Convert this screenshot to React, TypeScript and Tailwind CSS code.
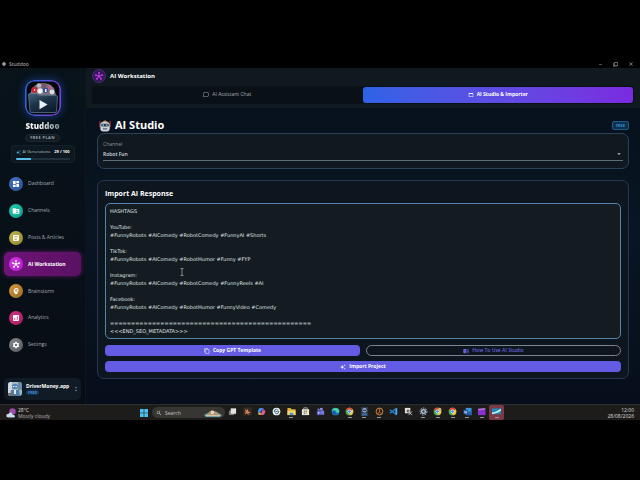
import { useState, type ReactNode } from 'react'
import {
  MdAnalytics,
  MdArrowDropDown,
  MdArticle,
  MdAutoAwesome,
  MdChromeReaderMode,
  MdClose,
  MdContentCopy,
  MdDashboard,
  MdFilterNone,
  MdFolderShared,
  MdHub,
  MdOutlineChatBubbleOutline,
  MdOutlineWebAsset,
  MdPsychology,
  MdRemove,
  MdSearch,
  MdSettings,
  MdUnfoldMore,
} from 'react-icons/md'

const navItems = [
  { label: 'Dashboard', icon: MdDashboard, color: 'from-[#4476c6] to-[#2a4f96]' },
  { label: 'Channels', icon: MdFolderShared, color: 'from-[#1fcfb2] to-[#129c8a]' },
  { label: 'Posts & Articles', icon: MdArticle, color: 'from-[#c6b548] to-[#93862f]' },
  { label: 'AI Workstation', icon: MdHub, color: 'from-[#d633e6] to-[#b31fd0]' },
  { label: 'Brainstorm', icon: MdPsychology, color: 'from-[#d59a3c] to-[#9c6b25]' },
  { label: 'Analytics', icon: MdAnalytics, color: 'from-[#d92f83] to-[#a81d62]' },
  { label: 'Settings', icon: MdSettings, color: 'from-[#85898d] to-[#55595d]' },
]

const response = `HASHTAGS

YouTube:
#FunnyRobots #AIComedy #RobotComedy #FunnyAI #Shorts

TikTok:
#FunnyRobots #AIComedy #RobotHumor #Funny #FYP

Instagram:
#FunnyRobots #AIComedy #RobotComedy #FunnyReels #AI

Facebook:
#FunnyRobots #AIComedy #RobotHumor #FunnyVideo #Comedy

================================================
<<<END_SEO_METADATA>>>`

function Logo() {
  return (
    <svg viewBox="0 0 36 36" className="size-9 rounded-[9px] shadow-[0_0_9px_#2563eb88]">
      <defs>
        <linearGradient id="ring" x1="0" y1="0" x2="1" y2="0.3">
          <stop offset="0" stopColor="#2467d8" />
          <stop offset="1" stopColor="#7543d6" />
        </linearGradient>
        <linearGradient id="folder" x1="0" y1="0" x2="0.6" y2="1">
          <stop offset="0" stopColor="#45637b" />
          <stop offset="0.5" stopColor="#1d3549" />
          <stop offset="1" stopColor="#0d1d2c" />
        </linearGradient>
      </defs>
      <rect x="0.8" y="0.8" width="34.4" height="34.4" rx="8.5" fill="#05070d" stroke="url(#ring)" strokeWidth="1.6" />
      <path d="M5 15 7 8l5-4 5-1 7 1 5 4 2 7z" fill="#77717d" />
      <circle cx="9.5" cy="10" r="3" fill="#c92334" />
      <circle cx="14" cy="5.5" r="2.3" fill="#b4bbc6" />
      <circle cx="19" cy="5.5" r="2.4" fill="#7f5660" />
      <circle cx="15" cy="11" r="2.8" fill="#e6e9ee" />
      <circle cx="20.5" cy="10" r="2.6" fill="#3a4a9d" />
      <circle cx="25" cy="7.5" r="2.3" fill="#b16a8d" />
      <circle cx="27" cy="12" r="2.4" fill="#d9dde6" />
      <path d="m9 9 1.7 1L9 11zM14 10.5h2v2h-2zM20 9h1.5v3H20z" fill="#fff" />
      <path
        d="M3.5 15q0-1.5 1.5-1.5h7l2 2h17q1.7 0 1.5 1.5l-1 14q-.1 1.5-1.5 1.5H6.5Q5 32.5 4.9 31z"
        fill="url(#folder)"
        stroke="#6f94ad"
        strokeWidth="0.6"
      />
      <path d="m14.5 20 8 4.6-8 4.6z" fill="#e9f2f8" />
    </svg>
  )
}

function RobotHead() {
  return (
    <svg viewBox="0 0 12 12" className="size-3">
      <path d="M.4 1h1v6h-1zM10.6 1h1v6h-1z" fill="#c8303f" />
      <path d="M4 1.5Q6-.3 8 1.5l.6 1H3.4z" fill="#c89c67" />
      <rect x="1.3" y="2" width="9.4" height="9.5" rx="3" fill="#ccd0da" />
      <rect x="2.2" y="3.8" width="7.6" height="2.8" rx="1.4" fill="#26384a" />
      <circle cx="4.2" cy="5.2" r="0.9" fill="#68b9d2" />
      <circle cx="7.8" cy="5.2" r="0.9" fill="#68b9d2" />
      <rect x="3.7" y="8.3" width="4.6" height="1.3" rx="0.5" fill="#5b6473" />
    </svg>
  )
}

function Avatar() {
  return (
    <svg viewBox="0 0 14 14" className="size-3.5 shrink-0 rounded-[3px]">
      <rect width="14" height="14" fill="#9fb6c6" />
      <path d="M0 0h4v14H0z" fill="#d1d8dc" />
      <path d="M10 0h4v8h-4z" fill="#6c8ba0" />
      <rect x="4" y="2" width="6" height="5" rx="2" fill="#4f87b0" />
      <path d="M5 4h1.5v1H5zM7.5 4H9v1H7.5z" fill="#e6f5ff" />
      <path d="M3 8h8l1 6H2z" fill="#4d7ba2" />
      <path d="M6 8h2v4H6z" fill="#dfe7ec" />
      <path d="M0 11h3l1 3H0z" fill="#836c54" />
    </svg>
  )
}

function Sidebar() {
  const [active, setActive] = useState('AI Workstation')

  return (
    <aside className="flex w-[86px] shrink-0 flex-col border-r border-[#0d1521] bg-linear-to-b from-[#08131a] to-[#080d15] px-1">
      <div className="flex flex-col items-center pt-3">
        <Logo />
        <p className="mt-1 bg-linear-to-r from-white from-35% to-[#7d8d98] bg-clip-text text-[8px] leading-[12px] font-extrabold text-transparent">
          Studdoo
        </p>
        <p className="mt-0.5 rounded-full border border-[#1c2932] bg-[#111c23] px-1 text-[4px] leading-[6px] font-bold tracking-widest text-[#9aa5ab]">
          FREE PLAN
        </p>
        <div className="mt-[3px] w-16 rounded-[4px] border border-[#15212a] bg-[#0e1820] px-1 py-0.5 whitespace-nowrap">
          <div className="flex items-center text-[4px] leading-[8px]">
            <MdAutoAwesome className="mr-0.5 size-[5px] text-[#4db4e8]" />
            <span className="text-[#b9c4ca]">AI Generations</span>
            <span className="ml-auto font-bold text-white">29 / 100</span>
          </div>
          <div className="mt-0.5 h-0.5 overflow-hidden rounded-full bg-[#21313b]">
            <div className="h-full w-[29%] bg-[#58bfec]" />
          </div>
        </div>
      </div>

      <nav className="mt-[9px] flex flex-1 flex-col justify-between">
        {navItems.map(({ label, icon: Icon, color }) => (
          <button
            key={label}
            onClick={() => setActive(label)}
            className={`flex h-6 items-center gap-[5px] rounded-[5px] pl-[5px] text-[5px] ${
              active === label
                ? 'bg-linear-to-r from-[#701379] to-[#5a1163] font-bold text-white shadow-[0_0_5px_#a21caf88]'
                : 'font-medium text-[#a3abb0]'
            }`}
          >
            <span className={`grid size-[14px] place-items-center rounded-full bg-linear-to-br ${color}`}>
              <Icon className="size-2 text-white" />
            </span>
            {label}
          </button>
        ))}
      </nav>

      <button className="mt-[21px] mb-1 flex h-[22px] items-center gap-1 rounded-[5px] bg-[#101b26] px-1 text-left">
        <Avatar />
        <span className="flex flex-1 flex-col items-start">
          <span className="text-[5px] leading-[7px] font-bold text-white">DriverMoney.app</span>
          <span className="rounded-[2px] bg-[#113255] px-0.5 text-[4px] leading-[5px] font-bold text-[#4a8bd0]">FREE</span>
        </span>
        <MdUnfoldMore className="size-1.5 shrink-0 text-[#a4adb5]" />
      </button>
    </aside>
  )
}

function Workstation() {
  const [text, setText] = useState(response)

  return (
    <main className="flex min-w-0 flex-1 flex-col bg-linear-to-b from-[#07101b] via-[#091523] to-[#070e1b]">
      <header className="bg-[#101820] px-1.5 pb-1">
        <div className="flex h-[18px] items-center gap-1 pb-0.5">
          <span className="grid size-[14px] place-items-center rounded-full border border-[#4a2a73] bg-[#33195a]">
            <MdHub className="size-2 text-[#c33be4]" />
          </span>
          <h1 className="text-[6px] font-bold text-white">AI Workstation</h1>
        </div>
        <div role="tablist" className="flex rounded-[3px] bg-[#0a1116] pr-px">
          <button
            role="tab"
            aria-selected="false"
            className="flex h-[18px] flex-1 items-center justify-center gap-[3px] text-[5px] font-medium text-[#a5adb2]"
          >
            <MdOutlineChatBubbleOutline className="size-1.5" />
            AI Assistant Chat
          </button>
          <button
            role="tab"
            aria-selected="true"
            className="my-px flex flex-1 items-center justify-center gap-[3px] rounded-[3px] bg-linear-to-r from-[#2c63e6] to-[#7a2ae0] text-[5px] font-bold text-white"
          >
            <MdOutlineWebAsset className="size-1.5" />
            AI Studio &amp; Importer
          </button>
        </div>
      </header>

      <div className="flex-1 px-[11px] pt-2.5">
        <div className="flex h-[15px] items-center gap-1 pl-0.5">
          <RobotHead />
          <h2 className="text-[11px] font-bold text-white">AI Studio</h2>
          <span className="ml-auto rounded-[2px] border border-[#205b86] bg-[#0c3050] px-[3px] text-[4px] leading-[7px] font-bold text-[#3c8cc7]">
            FREE
          </span>
        </div>

        <section className="rounded-[7px] border border-[#2b4156] bg-[#101820] px-[5px] pt-[6px] pb-[7px]">
          <label htmlFor="channel" className="block text-[5px] leading-[8px] text-[#8b959c]">
            Channel
          </label>
          <div className="relative mt-0.5">
            <select
              id="channel"
              className="block h-[11px] w-full appearance-none border-b border-[#5b7078] bg-transparent text-[5px] font-semibold text-[#d8dde0] outline-none"
            >
              <option>Robot Fun</option>
            </select>
            <MdArrowDropDown className="pointer-events-none absolute top-0 right-0 size-2 text-[#c8ced3]" />
          </div>
        </section>

        <section className="mt-[11px] rounded-[7px] border border-[#2b3452] bg-[#0d161e] px-[7px] pt-[7px] pb-1.5">
          <h3 className="text-[7px] leading-[11px] font-bold text-white">
            <label htmlFor="response">Import AI Response</label>
          </h3>
          <div className="relative mt-1">
            <textarea
              id="response"
              rows={16}
              value={text}
              onChange={(e) => setText(e.target.value)}
              className="block w-full resize-none overflow-hidden rounded-[5px] border border-[#5585ae] bg-[#141c21] px-1 py-[3px] font-['DejaVu_Sans',sans-serif] text-[5px] leading-[8px] text-[#dfe3e4] outline-none"
            />
            <svg viewBox="0 0 4 8" className="pointer-events-none absolute top-[65px] left-[75px] h-2 w-1">
              <path d="M.5.5h3M.5 7.5h3M2 .5v7" stroke="#aeb4b6" strokeWidth="0.7" />
            </svg>
          </div>
          <div className="mt-1.5 grid grid-cols-2 gap-1.5">
            <button className="flex h-[11px] items-center justify-center gap-[3px] rounded-[4px] bg-[#635be3] text-[5px] font-bold text-white">
              <MdContentCopy className="size-1.5" />
              Copy GPT Template
            </button>
            <button className="flex h-[11px] items-center justify-center gap-[3px] rounded-full border border-[#7d858c] text-[5px] font-semibold text-[#6860d8]">
              <MdChromeReaderMode className="size-1.5" />
              How To Use AI Studio
            </button>
          </div>
          <button className="mt-[5px] flex h-[11px] w-full items-center justify-center gap-[3px] rounded-[4px] bg-[#635be3] text-[5px] font-bold text-white">
            <MdAutoAwesome className="size-1.5" />
            Import Project
          </button>
        </section>
      </div>
    </main>
  )
}

const chrome = (
  <>
    <circle cx="5" cy="5" r="4.3" fill="#48a856" />
    <path d="M5 5 1.3 2.8A4.3 4.3 0 0 1 8.7 2.8z" fill="#df493b" />
    <path d="M5 5 8.7 2.8A4.3 4.3 0 0 1 5 9.3z" fill="#f1c444" />
    <circle cx="5" cy="5" r="2.1" fill="#f3f5f5" />
    <circle cx="5" cy="5" r="1.5" fill="#4486df" />
  </>
)

const apps: { name: string; running?: boolean; current?: boolean; art: ReactNode }[] = [
  { name: 'Task View', art: <><path d="M1 4h6v5H1z" fill="#777" /><path d="M3 1.5h6v6H3z" fill="#e4e4e4" /></> },
  { name: 'Editor', art: <><path d="M.5.5h9v9h-9z" fill="#382b25" /><path d="m2 2 2 2 1-2 1 3 3 1-3 1 1 2-3-2-2 1 1-3z" fill="#d4834b" /></> },
  {
    name: 'Copilot',
    art: (
      <>
        <path d="M3 1h3.5L5 6.5H1Q1 2 3 1z" fill="#3e91df" />
        <path d="M6 1q2 0 2 2.5H5z" fill="#7653cf" />
        <path d="M5 3.5h4.3Q9 8 7 9H3.5z" fill="#df5a91" />
        <path d="M1 6.5h4L3.5 9Q1 9 1 6.5z" fill="#e2b84e" />
        <path d="m5 3.5 1 .5-1.5 3-1-.5z" fill="#262230" />
      </>
    ),
  },
  { name: 'ChatGPT', art: <><circle cx="5" cy="5" r="4.3" fill="#edf2f2" /><path d="M2.5 5.5q0-3 2.5-3l2 1.5M7.5 4.5q0 3-2.5 3L3 6M4 5h2" fill="none" stroke="#245568" strokeWidth="1" /></> },
  { name: 'File Explorer', running: true, art: <><path d="M.5 1h3.5l1 1.5h4.5V9h-9z" fill="#e2ae3b" /><path d="M.5 4h9v5h-9z" fill="#f5d66e" /><path d="M3 6.5h4V9H3z" fill="#4a8fc8" /></> },
  { name: 'Store', art: <><path d="M3 2.5V1h4v1.5" fill="none" stroke="#9fb6bb" /><path d="M1 2.5h8V9H1z" fill="#eeeee5" /><path d="M3 4h1.8v1.8H3z" fill="#dc5b45" /><path d="M5.2 4H7v1.8H5.2z" fill="#74ad45" /><path d="M3 6.2h1.8V8H3z" fill="#3e9bd4" /><path d="M5.2 6.2H7V8H5.2z" fill="#e6b23e" /></> },
  { name: 'Teams', art: <><circle cx="6" cy="2.3" r="1.6" fill="#8f90f0" /><circle cx="2.8" cy="3" r="1.2" fill="#7f80e0" /><path d="M3 4h6v4.5H4z" fill="#7877de" /><path d="M.8 4.5H5V9H.8z" fill="#5255c0" /><path d="M2 6h2M3 6v2" stroke="#fff" strokeWidth="0.7" /></> },
  { name: 'Edge', art: <><circle cx="5" cy="5" r="4.3" fill="#1976bd" /><path d="M.8 4.5A4.3 4.3 0 0 1 9.3 5Q8 7 6 6q0-2-2-2Q2 3.5.8 4.5z" fill="#48cfa7" /><path d="M4 4Q2.5 7 6.5 8 3 9 1.7 6.5 1.7 4 4 4z" fill="#125497" /></> },
  { name: 'Chrome', running: true, art: chrome },
  { name: 'Studdoo', running: true, art: <><path d="M1 0h8v10H1z" fill="#29394e" /><circle cx="5" cy="3.5" r="2.5" fill="#a8b5c3" /><path d="M3 3h4v1.5H3z" fill="#1c3c66" /><path d="M2 7h6v2.5H2z" fill="#3f6da4" /></> },
  { name: 'Navigator', running: true, art: <><circle cx="5" cy="5" r="3.8" fill="#2b2518" stroke="#c29b42" /><path d="M5 1v4.5L2.5 8M5 5.5 7.5 8" fill="none" stroke="#ce553a" strokeWidth="1.1" /></> },
  { name: 'VS Code', art: <><path d="m7 .8 2.2 1v6.4L7 9.2z" fill="#47aced" /><path d="M7.5 2 1 7M7.5 8 1 3" stroke="#2385ce" strokeWidth="1.5" /></> },
  { name: 'Snipping Tool', art: <><path d="M1 1h6v6H1z" fill="#e9e4dc" /><path d="M3 3h3v3H3z" fill="#685f5b" /><path d="m5 5 4 4M9 5 5 9" stroke="#b8c6ce" /></> },
  { name: 'Settings', running: true, art: <><circle cx="5" cy="5" r="3.8" fill="none" stroke="#93a5b2" strokeWidth="1.2" strokeDasharray="1.8 1" /><circle cx="5" cy="5" r="2.8" fill="#b9c7d1" /><circle cx="5" cy="5" r="1.3" fill="#2c4257" /></> },
  { name: 'Chrome profile 2', running: true, art: <>{chrome}<circle cx="7.5" cy="2.5" r="1.7" fill="#d9b66c" /></> },
  { name: 'Chrome profile 3', running: true, art: chrome },
  { name: 'Word', running: true, art: <><path d="M3 1h6.5v8H3z" fill="#3f93d9" /><path d="M3 5h6.5v4H3z" fill="#2362ad" /><path d="M.5 3h5v5h-5z" fill="#174d98" /><path d="m1.5 4 .8 3L3 5l.8 2 .7-3" fill="none" stroke="#fff" strokeWidth="0.6" /></> },
  { name: 'Video Editor', running: true, art: <><path d="M1 3.5h8.5V9H1z" fill="#8a32d0" /><path d="m1 2 8-1 .4 2-8 1z" fill="#bd6de7" /></> },
  { name: 'Recorder', running: true, current: true, art: <><path d="M0 1.5h10V8H0z" fill="#1c8ab5" /><path d="M0 6q4 0 10-4v2Q7 7 0 8z" fill="#cdeff2" /></> },
]

function Taskbar() {
  return (
    <footer className="flex h-4 items-center border-t border-[#2b2c2d] bg-[#1d1c1b] text-[5px] leading-[6px] text-[#dddddd]">
      <div className="flex flex-1 items-center gap-0.5 pl-1.5">
        <svg viewBox="0 0 10 10" className="size-2.5">
          <circle cx="6.5" cy="3.5" r="3.2" fill="#9e4aae" />
          <path d="M2 9.5q-2-.4-1.7-2.2Q.8 5.7 2.3 6q1-2.2 3-1.3 1.3.6 1.2 2Q8.8 6.5 9 8.2 8.9 9.5 7.5 9.5z" fill="#c9d9ef" />
        </svg>
        <p>
          28°C
          <br />
          <span className="text-[#b4b4b4]">Mostly cloudy</span>
        </p>
      </div>

      <div className="flex items-center">
        <button aria-label="Start" className="grid w-4 place-items-center">
          <svg viewBox="0 0 8 8" className="size-2">
            <path d="M0 0h3.7v3.7H0zM4.3 0H8v3.7H4.3zM0 4.3h3.7V8H0zM4.3 4.3H8V8H4.3z" fill="#4cc0ee" />
          </svg>
        </button>
        <div className="flex h-[11px] w-[73px] items-center gap-[3px] rounded-full bg-[#373633] pl-1">
          <MdSearch className="size-1.5 shrink-0" />
          <input aria-label="Search" placeholder="Search" className="w-9 bg-transparent outline-none placeholder:text-[#c5c5c5]" />
          <svg viewBox="0 0 18 8" className="h-2 w-[18px]">
            <path d="M0 6q4-3 9-3t9 3l-2 2H2z" fill="#6fa3ae" />
            <path d="M4 6 5 3l3-2 2 1 3 1 2 3z" fill="#b29777" />
            <path d="M7 2h3v3H7z" fill="#e0d6bf" />
            <path d="M2 6.5h14" stroke="#d6c4a0" />
          </svg>
        </div>
        <div className="grid w-[279px] grid-cols-19">
          {apps.map((app) => (
            <button
              key={app.name}
              aria-label={app.name}
              className={`flex h-[15px] flex-col items-center justify-center ${app.current ? 'rounded-[2px] bg-[#7b3b46]' : ''}`}
            >
              <svg viewBox="0 0 10 10" className="size-[9px]">{app.art}</svg>
              <span className={`mt-px h-px rounded-full ${app.running ? 'w-1 bg-[#9b9b9b]' : 'w-1'}`} />
            </button>
          ))}
        </div>
      </div>

      <p className="flex-1 pr-1.5 text-right">
        12:00
        <br />
        28/08/2026
      </p>
    </footer>
  )
}

export default function App() {
  return (
    <div className="min-h-screen bg-black pt-[60px] pb-[60px] font-['Open_Sans','Noto_Sans',sans-serif]">
      <div className="flex h-2 items-center gap-[3px] pr-1.5 pl-0.5 text-[5px] leading-[8px] text-[#c2c5c7]">
        <svg viewBox="0 0 6 6" className="size-1">
          <circle cx="3" cy="3" r="2.6" fill="#c9cdd0" />
          <path d="M1.5 2.5h3v1h-3z" fill="#222" />
        </svg>
        <span>Studdoo</span>
        <div className="ml-auto flex items-center gap-2.5 text-[#c8c8c8]">
          <button aria-label="Minimize"><MdRemove className="size-[5px]" /></button>
          <button aria-label="Restore"><MdFilterNone className="size-[5px]" /></button>
          <button aria-label="Close"><MdClose className="size-1.5" /></button>
        </div>
      </div>
      <div className="flex min-h-[336px]">
        <Sidebar />
        <Workstation />
      </div>
      <Taskbar />
    </div>
  )
}
